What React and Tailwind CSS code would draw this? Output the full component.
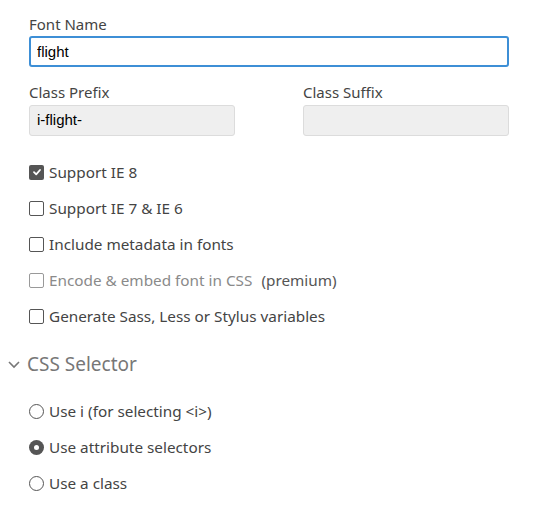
import { useState } from 'react'

const font = { fontFamily: '"Noto Sans", "Open Sans", sans-serif' }

function Check({ checked, disabled, label, extra }) {
  return (
    <label className={`flex h-9 items-center gap-[5px] text-[15.3px] ${disabled ? 'text-[#8a8a8a]' : 'text-[#444]'}`}>
      {checked ? (
        <span className="flex h-[15px] w-[15px] items-center justify-center rounded-[2px] bg-[#555]">
          <svg width="10" height="10" viewBox="0 0 10 10">
            <path d="M2 5.2 L4.2 7.3 L8 3" fill="none" stroke="#fff" strokeWidth="1.8" strokeLinecap="round" strokeLinejoin="round" />
          </svg>
        </span>
      ) : (
        <span className={`h-[15px] w-[15px] rounded-[2px] border-[1.5px] ${disabled ? 'border-[#999]' : 'border-[#555]'}`} />
      )}
      <span>{label}</span>
      {extra && <span className="ml-[4px] text-[#555]">{extra}</span>}
    </label>
  )
}

function Radio({ checked, label }) {
  return (
    <label className="flex h-9 items-center gap-[5px] text-[15.3px] text-[#444]">
      {checked ? (
        <span className="flex h-[15px] w-[15px] items-center justify-center rounded-full bg-[#555]">
          <span className="h-[5px] w-[5px] rounded-full bg-white" />
        </span>
      ) : (
        <span className="h-[15px] w-[15px] rounded-full border-[1.5px] border-[#555]" />
      )}
      <span>{label}</span>
    </label>
  )
}

export default function App() {
  const [name, setName] = useState('flight')

  return (
    <div className="h-[514px] w-[542px] bg-white pl-[29px] pr-[33px] pt-[14px]" style={font}>
      <div className="text-[15px] leading-5 text-[#444]">Font Name</div>
      <input
        value={name}
        onChange={e => setName(e.target.value)}
        className="mt-[2px] h-[31px] w-full rounded-[3px] border-2 border-[#3d8fd6] px-[6px] text-[15px] text-black outline-none"
        style={{ fontFamily: '"Liberation Sans", Arial, sans-serif' }}
      />
      <div className="mt-[15px] grid grid-cols-[206px_206px] justify-between">
        <div>
          <div className="text-[15px] leading-5 text-[#444]">Class Prefix</div>
          <div
            className="mt-[3px] flex h-[31px] items-center rounded-[3px] border border-[#dcdcdc] bg-[#efefef] px-[7px] text-[15px] text-black"
            style={{ fontFamily: '"Liberation Sans", Arial, sans-serif' }}
          >
            i-flight-
          </div>
        </div>
        <div>
          <div className="text-[15px] leading-5 text-[#444]">Class Suffix</div>
          <div className="mt-[3px] h-[31px] rounded-[3px] border border-[#dcdcdc] bg-[#efefef]" />
        </div>
      </div>

      <div className="mt-[18px]">
        <Check checked label="Support IE 8" />
        <Check label="Support IE 7 & IE 6" />
        <Check label="Include metadata in fonts" />
        <Check disabled label="Encode & embed font in CSS" extra="(premium)" />
        <Check label="Generate Sass, Less or Stylus variables" />
      </div>

      <div className="-ml-[22px] mt-[16px] flex items-center gap-[6px] text-[19px] text-[#777]">
        <svg width="14" height="14" viewBox="0 0 14 14">
          <path d="M2 5 L7 10 L12 5" fill="none" stroke="#777" strokeWidth="1.6" />
        </svg>
        <span>CSS Selector</span>
      </div>

      <div className="mt-[15px]">
        <Radio label="Use i (for selecting <i>)" />
        <Radio checked label="Use attribute selectors" />
        <Radio label="Use a class" />
      </div>
    </div>
  )
}
